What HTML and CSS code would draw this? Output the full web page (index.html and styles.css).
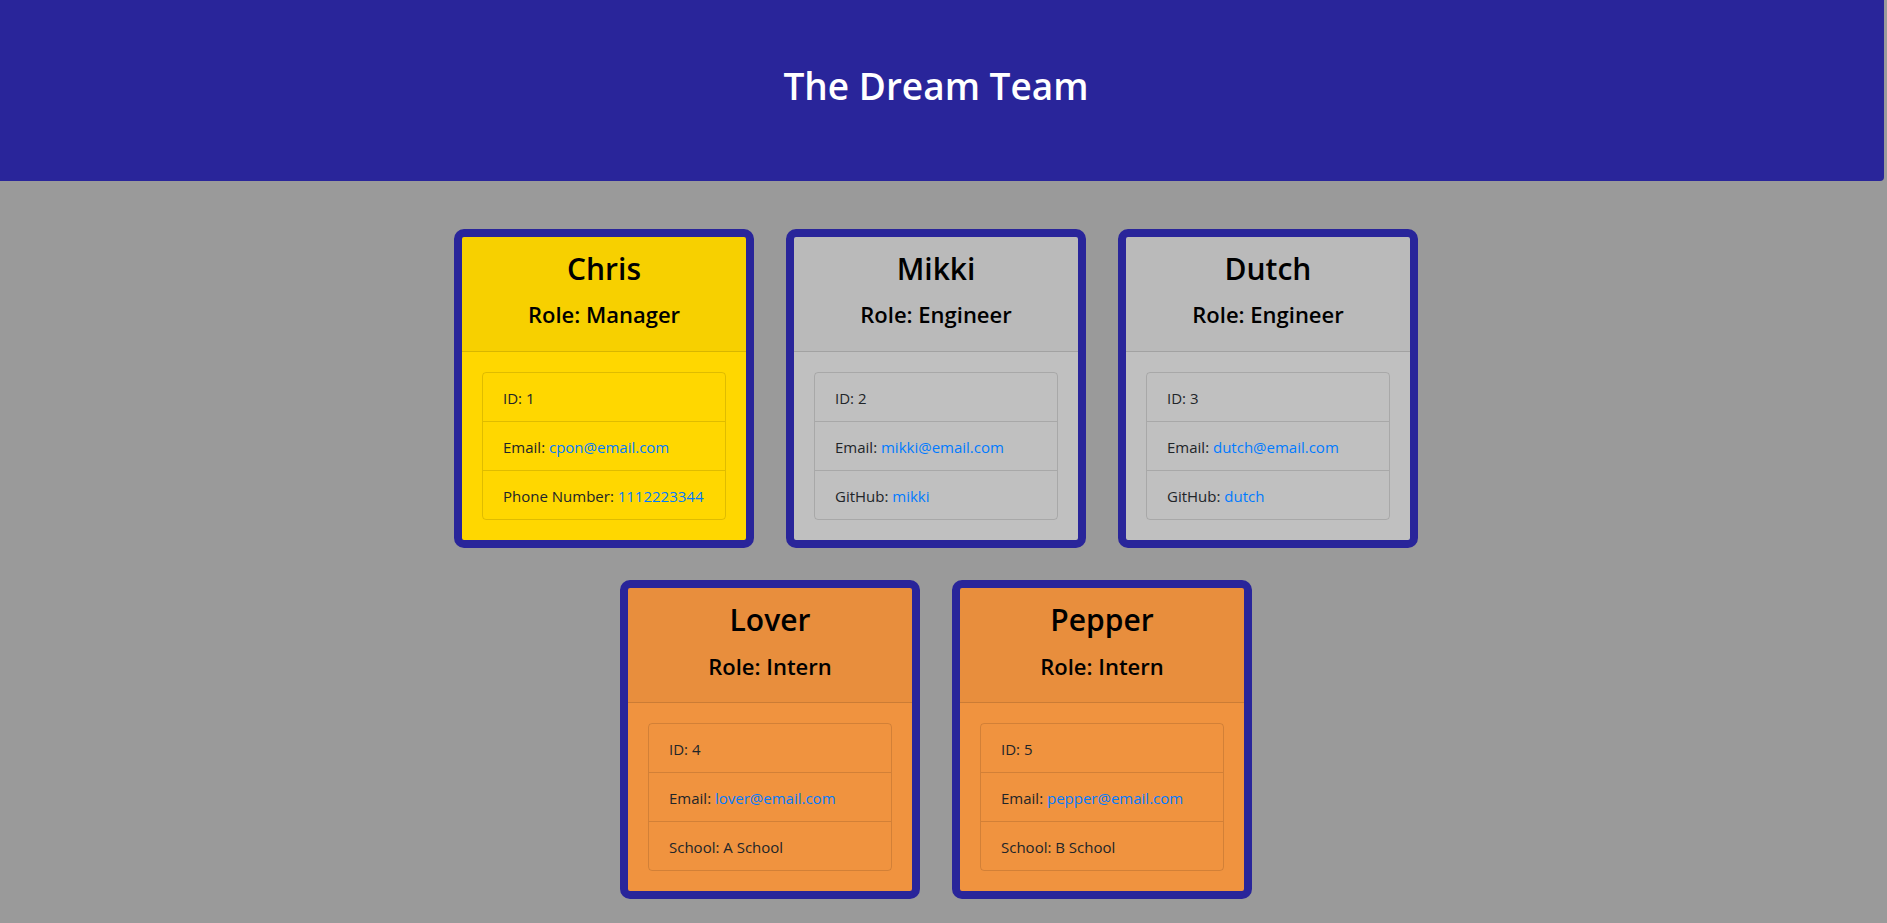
FILE: index.html
```html
<!DOCTYPE html>
<html lang="en">
<head>
<meta charset="utf-8">
<title>The Dream Team</title>
<link rel="stylesheet" href="styles.css">
</head>
<body>
<header class="banner">
  <h1 class="banner-title">The Dream Team</h1>
</header>
<div class="page">
  <main class="team">
    <section class="card card-manager">
      <div class="card-header">
        <h2 class="card-name">Chris</h2>
        <h4 class="card-role">Role: Manager</h4>
      </div>
      <div class="card-body">
        <ul class="info-list">
          <li class="info-item">ID: 1</li>
          <li class="info-item">Email: <a href="#">cpon@email.com</a></li>
          <li class="info-item">Phone Number: <a href="#">1112223344</a></li>
        </ul>
      </div>
    </section>
    <section class="card card-engineer">
      <div class="card-header">
        <h2 class="card-name">Mikki</h2>
        <h4 class="card-role">Role: Engineer</h4>
      </div>
      <div class="card-body">
        <ul class="info-list">
          <li class="info-item">ID: 2</li>
          <li class="info-item">Email: <a href="#">mikki@email.com</a></li>
          <li class="info-item">GitHub: <a href="#">mikki</a></li>
        </ul>
      </div>
    </section>
    <section class="card card-engineer">
      <div class="card-header">
        <h2 class="card-name">Dutch</h2>
        <h4 class="card-role">Role: Engineer</h4>
      </div>
      <div class="card-body">
        <ul class="info-list">
          <li class="info-item">ID: 3</li>
          <li class="info-item">Email: <a href="#">dutch@email.com</a></li>
          <li class="info-item">GitHub: <a href="#">dutch</a></li>
        </ul>
      </div>
    </section>
    <section class="card card-intern">
      <div class="card-header">
        <h2 class="card-name">Lover</h2>
        <h4 class="card-role">Role: Intern</h4>
      </div>
      <div class="card-body">
        <ul class="info-list">
          <li class="info-item">ID: 4</li>
          <li class="info-item">Email: <a href="#">lover@email.com</a></li>
          <li class="info-item">School: A School</li>
        </ul>
      </div>
    </section>
    <section class="card card-intern">
      <div class="card-header">
        <h2 class="card-name">Pepper</h2>
        <h4 class="card-role">Role: Intern</h4>
      </div>
      <div class="card-body">
        <ul class="info-list">
          <li class="info-item">ID: 5</li>
          <li class="info-item">Email: <a href="#">pepper@email.com</a></li>
          <li class="info-item">School: B School</li>
        </ul>
      </div>
    </section>
  </main>
</div>
</body>
</html>
```
FILE: styles.css
```css
* { box-sizing: border-box; }

html, body {
  margin: 0;
  padding: 0;
}

body {
  background: #9a9a9a;
  font-family: "Open Sans", "Noto Sans", "Liberation Sans", sans-serif;
  font-size: 16px;
  color: #212529;
  overflow: hidden;
}

.banner {
  background: #29259a;
  margin: 0 3px 32px 0;
  border-radius: 0 0 4px 0;
  padding: 59px 12px 69px 0;
  text-align: center;
}

.banner-title {
  margin: 0;
  color: #ffffff;
  font-size: 37px;
  line-height: 53px;
  font-weight: 600;
}

.page {
  padding-right: 15px;
}

.team {
  max-width: 1140px;
  margin: 0 auto;
  padding: 0 15px;
  display: flex;
  flex-wrap: wrap;
  justify-content: center;
}

.card {
  width: 300px;
  margin: 16px;
  border: 8px solid #29259a;
  border-radius: 10px;
  overflow: hidden;
  display: flex;
  flex-direction: column;
}

.card-manager { background: #ffd700; }
.card-engineer { background: #c0c0c0; }
.card-intern { background: #f0933f; }

.card-header {
  background: rgba(0, 0, 0, 0.03);
  border-bottom: 1px solid rgba(0, 0, 0, 0.125);
  padding: 13px 20px 12px;
  text-align: center;
  color: #000;
}

.card-name {
  margin: 0 0 12px;
  font-size: 30px;
  line-height: 38.4px;
  font-weight: 600;
}

.card-role {
  margin: 0 0 10px;
  font-size: 22px;
  line-height: 28.8px;
  font-weight: 600;
}

.card-body {
  padding: 20px;
}

.info-list {
  list-style: none;
  margin: 0;
  padding: 0;
  border: 1px solid rgba(0, 0, 0, 0.125);
  border-radius: 4px;
}

.info-item {
  padding: 13px 20px 11px;
  font-size: 15px;
  line-height: 24px;
  color: #212529;
}

.info-item + .info-item {
  border-top: 1px solid rgba(0, 0, 0, 0.125);
}

.info-item a {
  color: #007bff;
  text-decoration: none;
}
```
